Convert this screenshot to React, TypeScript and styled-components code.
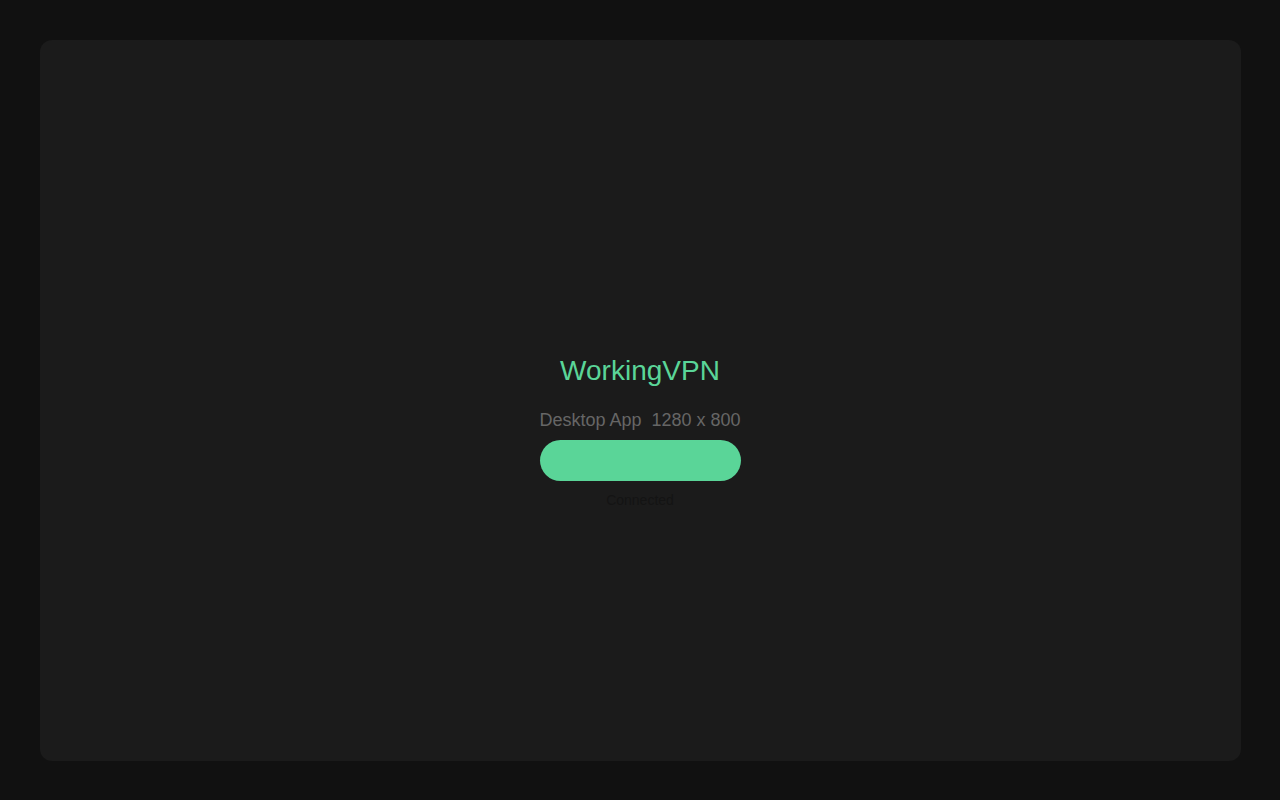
import React from 'react';
import styled, { createGlobalStyle } from 'styled-components';

const GlobalStyle = createGlobalStyle`
  html, body {
    margin: 0;
    padding: 0;
    background: #111111;
    font-family: "Liberation Sans", Arial, sans-serif;
  }
`;

const Screen = styled.div`
  width: 1280px;
  height: 800px;
  padding: 40px 39px 39px 40px;
  box-sizing: border-box;
  background: #111111;
  display: flex;
`;

const Panel = styled.main`
  flex: 1;
  background: #1b1b1b;
  border-radius: 12px;
  padding: 62px 1px 0 0;
  display: flex;
  flex-direction: column;
  align-items: center;
  justify-content: center;
`;

const Title = styled.h1`
  margin: 0;
  font-size: 28px;
  font-weight: 400;
  color: #5ad598;
  line-height: 32px;
`;

const Subtitle = styled.p`
  margin: 23px 0 0;
  font-size: 18px;
  color: #666666;
  line-height: 20px;
  white-space: pre;
`;

const ConnectButton = styled.button`
  margin-top: 10px;
  width: 201px;
  height: 41px;
  border: none;
  border-radius: 21px;
  background: #5ad598;
  cursor: pointer;
`;

const Status = styled.span`
  margin-top: 11px;
  font-size: 14px;
  color: #141414;
  line-height: 16px;
`;

const App = () => {
  return (
    <>
      <GlobalStyle />
      <Screen>
        <Panel>
          <Title>WorkingVPN</Title>
          <Subtitle>Desktop App  1280 x 800</Subtitle>
          <ConnectButton aria-label="Connect" />
          <Status>Connected</Status>
        </Panel>
      </Screen>
    </>
  );
};

export default App;
